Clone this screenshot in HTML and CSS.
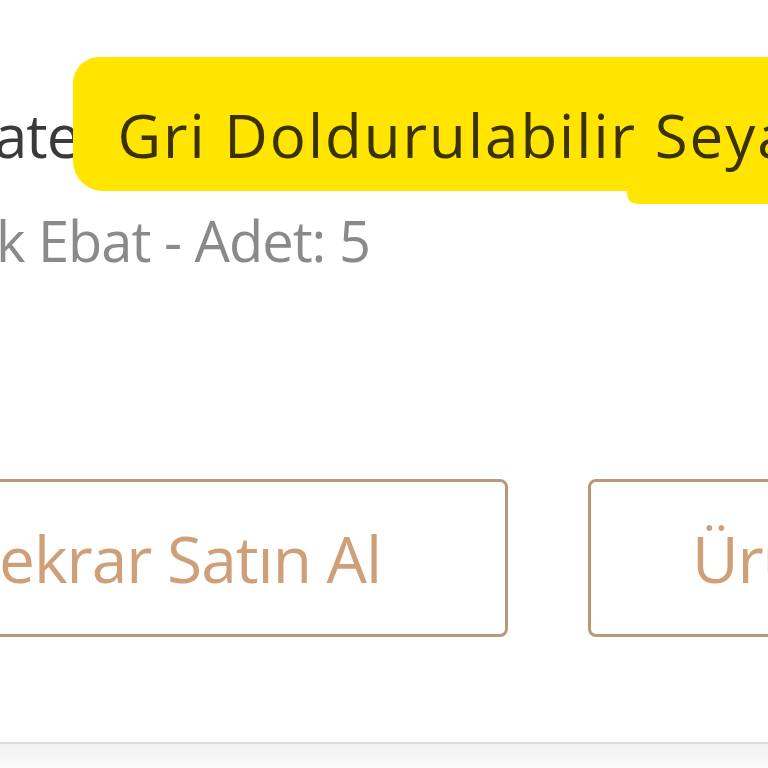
FILE: index.html
```html
<!doctype html>
<html lang="tr">
  <head>
    <meta charset="UTF-8" />
    <title>Siparişlerim</title>
    <link rel="stylesheet" href="styles.css">
  </head>
  <body>
    <div class="order-card">
      <div class="order-info">
        <p class="product-name">ate<mark class="highlight">Gri Doldurulabilir Seyahat Şişesi</mark></p>
        <p class="product-meta">k Ebat - Adet: 5</p>
      </div>

      <div class="order-actions">
        <button class="btn btn-outline btn-rebuy">Tekrar Satın Al</button>
        <button class="btn btn-outline btn-review">Ürünü Değerlendir</button>
      </div>
    </div>
    <div class="card-divider"></div>
  </body>
</html>
```

FILE: styles.css
```css
:root {
  --text-color: #333;
  --muted-color: #8a8a8a;
  --marker-color: #ffe500;
  --accent-color: #cf9f78;
  --accent-border: #b89a78;
}

* {
  margin: 0;
  padding: 0;
  box-sizing: border-box;
}

html,
body {
  height: 100%;
}

body {
  font-family: "Open Sans", "Noto Sans", sans-serif;
  background-color: #fff;
  color: var(--text-color);
  overflow: hidden;
}

.order-card {
  height: 742px;
  display: flex;
  flex-direction: column;
  overflow: hidden;
}

.order-info {
  padding-top: 69px;
  white-space: nowrap;
}

.product-name {
  font-size: 60px;
  line-height: 132px;
  letter-spacing: -1px;
  color: #3a3a3a;
  margin-left: -6px;
}

.highlight {
  position: relative;
  background-color: var(--marker-color);
  color: #3a3200;
  letter-spacing: 2px;
  margin-left: -6px;
  padding: 37px 0 15px 44px;
  border-radius: 26px 0 0 30px;
}

/* marker stroke runs a bit lower on its right half */
.highlight::after {
  content: "";
  position: absolute;
  left: 554px;
  right: 0;
  bottom: -13px;
  height: 14px;
  background-color: var(--marker-color);
  border-radius: 0 0 0 10px;
}

.product-meta {
  font-size: 56px;
  line-height: 70px;
  letter-spacing: -1px;
  color: var(--muted-color);
  margin-top: 4px;
  margin-left: -4px;
}

.order-actions {
  display: flex;
  gap: 80px;
  margin-top: 204px;
  margin-left: -162px;
}

.btn {
  font-family: inherit;
  background: #fff;
  cursor: pointer;
  white-space: nowrap;
}

.btn-outline {
  height: 158px;
  border: 3px solid var(--accent-border);
  border-radius: 8px;
  color: var(--accent-color);
  font-size: 64px;
  letter-spacing: -1px;
  flex-shrink: 0;
}

.btn-rebuy {
  width: 670px;
}

.btn-review {
  width: 750px;
}

.card-divider {
  height: 26px;
  border-top: 2px solid #dcdcdc;
  background: linear-gradient(#f2f2f2, #fafafa);
}
```
